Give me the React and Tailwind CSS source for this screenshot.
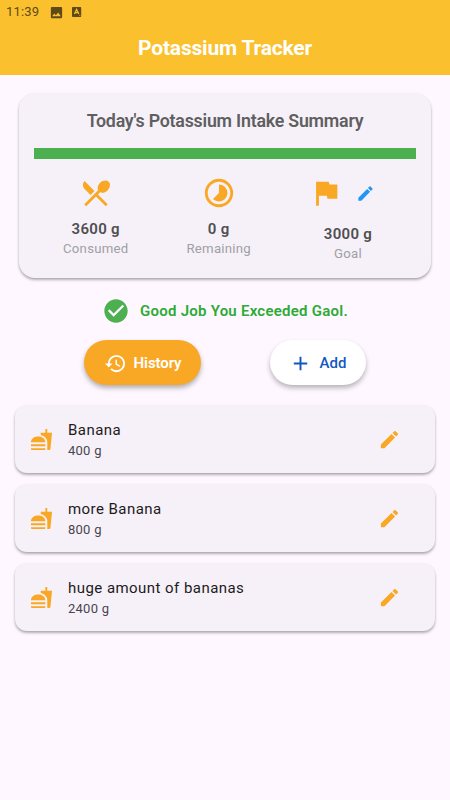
import { MdAdd, MdCheckCircle, MdFlag, MdHistory, MdImage, MdRestaurantMenu, MdTimelapse } from 'react-icons/md'

const entries = [
  { id: 1, name: 'Banana', amount: 400 },
  { id: 2, name: 'more Banana', amount: 800 },
  { id: 3, name: 'huge amount of bananas', amount: 2400 },
]

function PencilIcon({ className }) {
  return (
    <svg viewBox="0 0 24 24" fill="currentColor" className={className}>
      <path d="M3 17.25V21h3.75L17.81 9.94l-3.75-3.75L3 17.25zM20.71 7.04a1 1 0 0 0 0-1.41l-2.34-2.34a1 1 0 0 0-1.41 0l-1.83 1.83 3.75 3.75 1.83-1.83z" />
    </svg>
  )
}

function FastfoodIcon({ className }) {
  return (
    <svg viewBox="0 0 24 24" fill="currentColor" className={className}>
      <path d="M18.06 22.99h1.66c.84 0 1.53-.64 1.63-1.46L23 5.05h-5V1h-1.97v4.05h-4.97l.3 2.34c1.71.47 3.31 1.32 4.27 2.26 1.44 1.42 2.43 2.89 2.43 5.29v8.05zM1 21.99V21h15.03v.99c0 .55-.45 1-1.01 1H2.01c-.56 0-1.01-.45-1.01-1zm15.03-7c0-8-15.03-8-15.03 0h15.03zM1.02 17h15v2h-15z" />
    </svg>
  )
}

function KeyboardIcon() {
  return (
    <svg viewBox="0 0 10 10" className="w-[10px] h-[10px]" fill="none">
      <rect width="9.2" height="10" rx="0.8" fill="#5e4a18" />
      <path d="M2.4 7 4.6 2.4 6.8 7M3.2 5.6h2.8" stroke="#fbc02d" strokeWidth="1.2" />
      <path d="M7.2 8.4h1.2" stroke="#fbc02d" strokeWidth="0.7" />
    </svg>
  )
}

function Stat({ value, label, children }) {
  return (
    <div className="flex flex-col items-center whitespace-nowrap">
      {children}
      <p className="text-[15px] leading-[20px] font-semibold tracking-[0.3px] text-[#4f4f51]">{value}</p>
      <p className="text-[13.2px] leading-[20px] tracking-[0.25px] text-[#a09fa3]">{label}</p>
    </div>
  )
}

function EntryCard({ name, amount }) {
  return (
    <div className="h-[68px] flex items-center rounded-[12px] bg-[#f6f1f9] pl-[15px] pr-[34px] shadow-[0_2px_3px_rgba(0,0,0,0.28),0_1px_2px_rgba(0,0,0,0.08)]">
      <FastfoodIcon className="w-[23px] h-[23px] text-[#f9a825]" />
      <div className="ml-[15px] pt-[2px] flex-1">
        <p className="text-[15px] leading-[22px] tracking-[0.45px] text-[#1d1b20]">{name}</p>
        <p className="text-[13px] leading-[20px] tracking-[0.25px] text-[#49454f]">{amount} g</p>
      </div>
      <PencilIcon className="w-[23px] h-[23px] text-[#f9a825]" />
    </div>
  )
}

export default function App() {
  return (
    <div className="w-[450px] h-[800px] overflow-hidden bg-[#fef7ff] font-['Roboto',sans-serif]">
      <header className="h-[75px] bg-[#fbc02d]">
        {/* Status bar */}
        <div className="h-[24px] flex items-center pl-[6px] text-[#5e4a18]">
          <span className="text-[13px] tracking-[0.2px] w-[43px]">11:39</span>
          <MdImage className="w-[15px] h-[15px] mr-[8px]" />
          <KeyboardIcon />
        </div>
        <h1 className="text-center text-[21px] leading-[49px] font-bold tracking-[-0.2px] text-white">Potassium Tracker</h1>
      </header>

      {/* Summary */}
      <section className="mt-[18px] mx-[19px] h-[185px] rounded-[16px] bg-[#f6f1f9] px-[15px] pt-[17px] shadow-[0_2px_3px_rgba(0,0,0,0.28),0_1px_2px_rgba(0,0,0,0.08)]">
        <h2 className="text-center text-[17.8px] leading-[22px] font-semibold tracking-[-0.22px] text-[#5f5f61]">Today&apos;s Potassium Intake Summary</h2>
        <div className="mt-[16px] h-[11px] bg-[#4caf50]" />
        <div className="mt-[17px] flex justify-between pl-[29px] pr-[29px]">
          <Stat value="3600 g" label="Consumed">
            <MdRestaurantMenu className="w-[34px] h-[34px] mb-[9px] text-[#f9a825]" />
          </Stat>
          <Stat value="0 g" label="Remaining">
            <MdTimelapse className="w-[34px] h-[34px] mb-[9px] text-[#f9a825]" />
          </Stat>
          <Stat value="3000 g" label="Goal">
            <div className="flex items-center mb-[14px]">
              <MdFlag className="w-[34px] h-[34px] text-[#f9a825]" />
              <button className="w-[44px] flex justify-center">
                <PencilIcon className="w-[19px] h-[19px] text-[#2196f3]" />
              </button>
            </div>
          </Stat>
        </div>
      </section>

      <div className="mt-[19px] h-[28px] flex items-center pl-[102px] gap-[10px]">
        <MdCheckCircle className="w-[28px] h-[28px] text-[#4caf50]" />
        <p className="text-[15px] font-semibold tracking-[0.25px] text-[#2cab35]">Good Job You Exceeded Gaol.</p>
      </div>

      <div className="mt-[15px] flex pl-[84px] gap-[69px]">
        <button className="w-[117px] h-[45px] pt-px flex items-center justify-center gap-[7px] rounded-full bg-[#f9a825] text-white shadow-[0_3px_5px_rgba(0,0,0,0.3)]">
          <MdHistory className="w-[23px] h-[23px]" />
          <span className="text-[15px] font-semibold tracking-[-0.1px]">History</span>
        </button>
        <button className="w-[96px] h-[45px] pt-px pr-px flex items-center justify-center gap-[8px] rounded-full bg-white text-[#1158bd] shadow-[0_3px_5px_rgba(0,0,0,0.28)]">
          <MdAdd className="w-[23px] h-[23px]" />
          <span className="text-[15px] font-medium">Add</span>
        </button>
      </div>

      <div className="mt-[20px] px-[15px] flex flex-col gap-[11px]">
        {entries.map(e => (
          <EntryCard key={e.id} name={e.name} amount={e.amount} />
        ))}
      </div>
    </div>
  )
}
